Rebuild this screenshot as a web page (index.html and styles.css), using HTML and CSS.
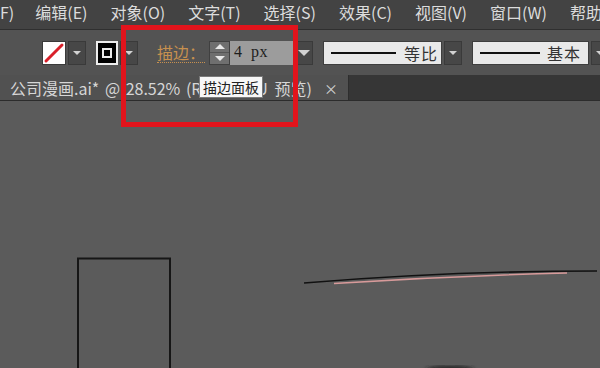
FILE: index.html
```html
<!DOCTYPE html>
<html lang="zh-CN">
<head>
<meta charset="utf-8">
<title>Illustrator</title>
<link rel="stylesheet" href="styles.css">
</head>
<body>
<div class="app">
  <div class="menubar">
    <span class="menu first">F)</span>
    <span class="menu">编辑(E)</span>
    <span class="menu">对象(O)</span>
    <span class="menu">文字(T)</span>
    <span class="menu">选择(S)</span>
    <span class="menu">效果(C)</span>
    <span class="menu">视图(V)</span>
    <span class="menu">窗口(W)</span>
    <span class="menu">帮助</span>
  </div>
  <div class="toolbar">
    <div class="sep"></div>
    <div class="swatch fill">
      <svg width="22" height="22" viewBox="0 0 22 22"><line x1="3" y1="19" x2="19" y2="3" stroke="#d9202a" stroke-width="3" stroke-linecap="round"/></svg>
    </div>
    <div class="dd"><span class="tri"></span></div>
    <div class="swatch stroke"><span class="inner"></span></div>
    <div class="dd"><span class="tri"></span></div>
    <span class="label">描边：</span>
    <div class="spinner">
      <div class="spin-btn"><span class="up"></span></div>
      <div class="spin-btn"><span class="down"></span></div>
    </div>
    <div class="field">4 px</div>
    <div class="dd wide"><span class="tri big"></span></div>
    <div class="profile"><span class="line"></span><span class="ptext">等比</span></div>
    <div class="dd"><span class="tri"></span></div>
    <div class="profile brush"><span class="line"></span><span class="ptext">基本</span></div>
    <div class="dd"><span class="tri"></span></div>
  </div>
  <div class="tabbar">
    <div class="tab"><span class="tabtext">公司漫画.ai* @ 28.52% (<span class="mode">RGB/GPU</span> 预览)</span><span class="close">×</span></div>
    <div class="tabrest"></div>
  </div>
  <div class="canvas">
    <svg class="art" width="600" height="267" viewBox="0 0 600 267">
      <defs>
        <filter id="blur"><feGaussianBlur stdDeviation="2"/></filter>
      </defs>
      <rect x="78" y="157.5" width="92" height="130" fill="none" stroke="#161616" stroke-width="2"/>
      <path d="M334 182.5 Q450 175 567 172" fill="none" stroke="#d79a9a" stroke-width="1.6"/>
      <path d="M304 182 Q450 170 597 170" fill="none" stroke="#111" stroke-width="1.6"/>
      <ellipse cx="450" cy="269" rx="24" ry="4" fill="#222" filter="url(#blur)"/>
    </svg>
  </div>
  <div class="tooltip">描边面板</div>
  <div class="highlight"></div>
</div>
</body>
</html>
```
FILE: styles.css
```css
* { box-sizing: border-box; }
html, body { margin: 0; padding: 0; }
body {
  width: 600px;
  height: 368px;
  overflow: hidden;
  background: #5b5b5b;
  font-family: "Noto Sans CJK SC", "Noto Sans", sans-serif;
}
.app {
  position: relative;
  width: 600px;
  height: 368px;
  display: flex;
  flex-direction: column;
}
.menubar {
  height: 30px;
  background: #434343;
  border-bottom: 1px solid #2f2f2f;
  display: flex;
  align-items: center;
  gap: 23px;
  color: #dcdcdc;
  font-size: 16px;
  line-height: 20px;
  white-space: nowrap;
  padding-bottom: 6px;
}
.menu { flex: none; }
.menu.first { margin-right: -2px; }
.toolbar {
  height: 45px;
  background: #535353;
  display: flex;
  align-items: center;
  padding-left: 33px;
}
.sep {
  width: 1px;
  height: 36px;
  background: #464646;
  margin-right: 9px;
}
.swatch {
  width: 24px;
  height: 24px;
  flex: none;
}
.swatch.fill {
  background: #fff;
  border: 1px solid #3a3a3a;
}
.swatch.fill svg { display: block; }
.swatch.stroke {
  width: 22px;
  margin-left: 10px;
  background: #000;
  border: 2px solid #ededed;
  display: flex;
  align-items: center;
  justify-content: center;
}
.swatch.stroke .inner {
  width: 10px;
  height: 10px;
  border: 2px solid #eaeaea;
}
.dd {
  width: 18px;
  height: 24px;
  margin-left: 2px;
  background: #474747;
  border: 1px solid #3a3a3a;
  display: flex;
  align-items: center;
  justify-content: center;
  flex: none;
}
.tri {
  width: 0;
  height: 0;
  border-left: 4px solid transparent;
  border-right: 4px solid transparent;
  border-top: 4px solid #d2d2d2;
}
.tri.big {
  border-left-width: 6px;
  border-right-width: 6px;
  border-top-width: 6px;
}
.label {
  margin-left: 19px;
  color: #c7904f;
  font-size: 16px;
  line-height: 19px;
  border-bottom: 1px dotted #c7904f;
  flex: none;
  white-space: nowrap;
}
.spinner {
  margin-left: 4px;
  width: 21px;
  height: 24px;
  display: flex;
  flex-direction: column;
  background: #6f6f6f;
  border: 1px solid #404040;
  flex: none;
}
.spin-btn {
  flex: 1;
  display: flex;
  align-items: center;
  justify-content: center;
}
.spin-btn + .spin-btn { border-top: 1px solid #555; }
.up, .down {
  width: 0;
  height: 0;
  border-left: 5px solid transparent;
  border-right: 5px solid transparent;
}
.up { border-bottom: 5px solid #e8e8e8; }
.down { border-top: 5px solid #e8e8e8; }
.field {
  width: 63px;
  height: 24px;
  background: #9c9c9c;
  color: #1e1e1e;
  font-family: "Liberation Serif", serif;
  font-size: 16px;
  line-height: 22px;
  padding-left: 4px;
  letter-spacing: 0.5px;
  word-spacing: 4px;
  flex: none;
}
.profile {
  margin-left: 10px;
  width: 119px;
  height: 24px;
  background: #e9e9e9;
  border: 1px solid #3e3e3e;
  display: flex;
  align-items: center;
  padding-left: 7px;
  flex: none;
}
.profile .line {
  width: 65px;
  height: 2px;
  background: #111;
}
.profile .ptext {
  margin-left: 8px;
  font-size: 16px;
  color: #333;
  letter-spacing: 1px;
}
.profile.brush {
  width: 117px;
  margin-left: 10px;
}
.profile.brush .line { width: 60px; }
.profile.brush .ptext { margin-left: 7px; }
.tabbar {
  height: 26px;
  display: flex;
  background: #363636;
  border-bottom: 1px solid #2c2c2c;
}
.tab {
  width: 349px;
  flex: none;
  background: #515151;
  display: flex;
  align-items: center;
  padding-left: 10px;
  padding-right: 10px;
  color: #d6d6d6;
  font-size: 16px;
  white-space: nowrap;
  overflow: hidden;
  border-right: 1px solid #2e2e2e;
}
.tabtext { flex: none; word-spacing: 2px; }
.mode { letter-spacing: 1px; }
.close {
  margin-left: auto;
  font-size: 14px;
  color: #cfcfcf;
}
.tabrest { flex: 1; }
.canvas {
  flex: 1;
  background: #5b5b5b;
  overflow: hidden;
}
.art { display: block; }
.tooltip {
  position: absolute;
  left: 199px;
  top: 76px;
  width: 64px;
  height: 22px;
  background: #f7f7f7;
  border: 1px solid #7a7a7a;
  color: #222;
  font-size: 14px;
  line-height: 20px;
  text-align: center;
}
.highlight {
  position: absolute;
  left: 121px;
  top: 25px;
  width: 177px;
  height: 102px;
  border: 5px solid #e1141c;
}
```
